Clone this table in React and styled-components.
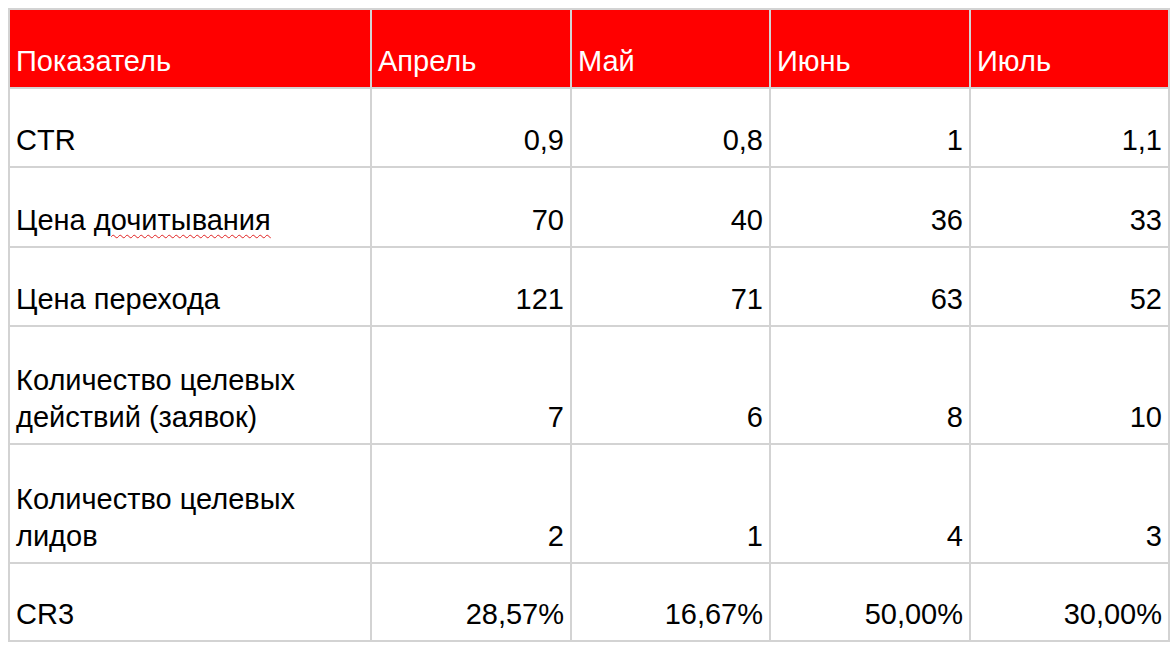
import React from 'react'
import styled, { createGlobalStyle } from 'styled-components'

const GlobalStyle = createGlobalStyle`
  body {
    margin: 0;
    background: #ffffff;
    font-family: "Liberation Sans", Arial, sans-serif;
  }
`

const months = ['Апрель', 'Май', 'Июнь', 'Июль']
const colWidths = [362, 200, 199, 200, 199]

const rows = [
  { label: 'CTR', values: ['0,9', '0,8', '1', '1,1'], height: 79 },
  { label: 'Цена', marked: 'дочитывания', values: ['70', '40', '36', '33'], height: 80 },
  { label: 'Цена перехода', values: ['121', '71', '63', '52'], height: 79 },
  { label: 'Количество целевых действий (заявок)', values: ['7', '6', '8', '10'], height: 118 },
  { label: 'Количество целевых лидов', values: ['2', '1', '4', '3'], height: 119 },
  { label: 'CR3', values: ['28,57%', '16,67%', '50,00%', '30,00%'], height: 78 },
]

const App = () => {
  return (
    <Page>
      <GlobalStyle />
      <Table>
        <colgroup>
          {colWidths.map((w, i) => (
            <Col key={i} $width={w} />
          ))}
        </colgroup>
        <thead>
          <Row $height={79}>
            <HeadCell>Показатель</HeadCell>
            {months.map((m) => (
              <HeadCell key={m}>{m}</HeadCell>
            ))}
          </Row>
        </thead>
        <tbody>
          {rows.map((r) => (
            <Row key={r.label + (r.marked || '')} $height={r.height}>
              <LabelCell>
                {r.label}
                {r.marked && (
                  <>
                    {' '}
                    <Misspelled>{r.marked}</Misspelled>
                  </>
                )}
              </LabelCell>
              {r.values.map((v, i) => (
                <NumCell key={i}>{v}</NumCell>
              ))}
            </Row>
          ))}
        </tbody>
      </Table>
    </Page>
  )
}

export default App

const Page = styled.div`
  padding: 8px 0 0 8px;
`

const Table = styled.table`
  border-collapse: collapse;
  table-layout: fixed;
  width: 1162px;
  border: 2px solid #d3d3d3;
`

const Col = styled.col`
  width: ${(p) => p.$width}px;
`

const Row = styled.tr`
  height: ${(p) => p.$height}px;
`

const Cell = styled.td`
  border: 2px solid #d3d3d3;
  vertical-align: bottom;
  padding: 0 6px 7px 6px;
  font-size: 29px;
  line-height: 37px;
  color: #000000;
`

const HeadCell = styled(Cell).attrs({ as: 'th' })`
  background: #ff0000;
  color: #ffffff;
  font-weight: normal;
  text-align: left;
`

const LabelCell = styled(Cell)`
  text-align: left;
`

const NumCell = styled(Cell)`
  text-align: right;
`

const Misspelled = styled.span`
  text-decoration-line: underline;
  text-decoration-style: wavy;
  text-decoration-color: #e02020;
  text-decoration-thickness: 1px;
  text-underline-offset: 4px;
`
